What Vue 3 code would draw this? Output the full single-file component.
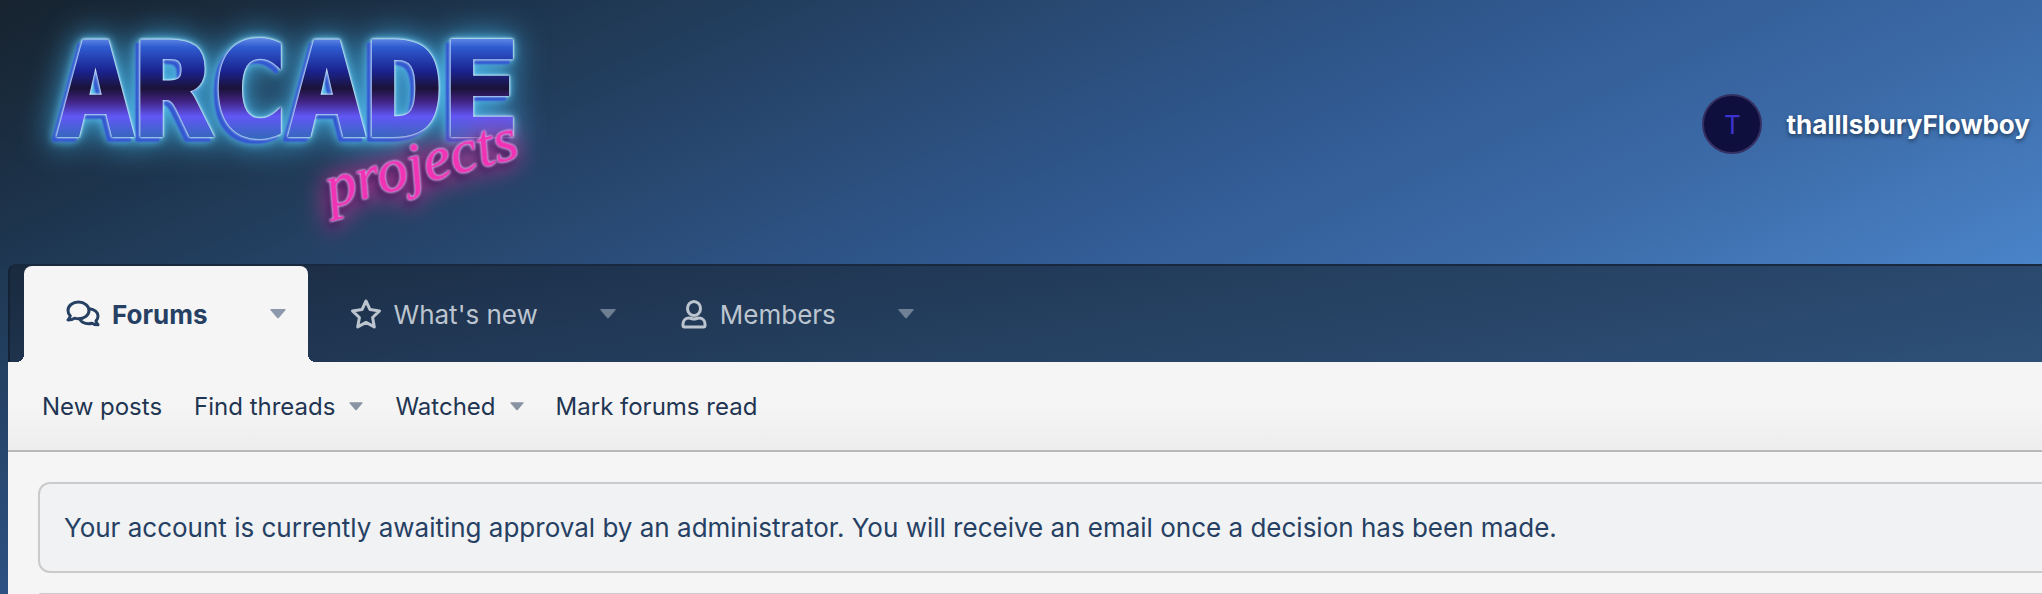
<template>
  <div class="page">
    <header class="header">
      <a href="#" class="logo" aria-label="Arcade Projects">
        <svg width="600" height="264" viewBox="0 0 600 264">
          <defs>
            <linearGradient id="chrome" gradientUnits="userSpaceOnUse" x1="0" y1="30" x2="0" y2="138">
              <stop offset="0" stop-color="#8db4f8" />
              <stop offset="0.16" stop-color="#2f5bd0" />
              <stop offset="0.38" stop-color="#1a2390" />
              <stop offset="0.54" stop-color="#1b1238" />
              <stop offset="0.66" stop-color="#402382" />
              <stop offset="0.8" stop-color="#6157f5" />
              <stop offset="1" stop-color="#3568bd" />
            </linearGradient>
          </defs>
          <text class="arcade" x="57" y="135">ARCADE</text>
          <g transform="rotate(-15 330 206)">
            <text class="script" x="330" y="208">projects</text>
          </g>
        </svg>
      </a>
      <a href="#" class="account">
        <span class="avatar">T</span>
        <span class="username">thaIllsburyFlowboy</span>
      </a>
    </header>

    <div class="shell">
      <nav class="nav">
        <div v-for="item in navItems" :key="item.label" class="tab" :class="{ active: item.active }">
          <a href="#" class="tab-link">
            <svg class="tab-icon" :viewBox="item.viewBox" :width="item.width" height="30">
              <path v-for="d in item.paths" :key="d" :d="d" />
            </svg>
            <span>{{ item.label }}</span>
          </a>
          <button type="button" class="tab-toggle" :aria-label="item.label + ' menu'">
            <svg width="16" height="10" viewBox="0 0 16 10"><path d="M1 0h14q1 0 .6 1L8.800 9q-.8.700-1.600 0L.4 1Q0 0 1 0z" /></svg>
          </button>
        </div>
      </nav>

      <nav class="subnav">
        <div v-for="link in subLinks" :key="link.label" class="sub-item">
          <a href="#">{{ link.label }}</a>
          <button v-if="link.menu" type="button" class="sub-toggle" :aria-label="link.label + ' menu'">
            <svg width="14" height="9" viewBox="0 0 16 10"><path d="M1 0h14q1 0 .6 1L8.800 9q-.8.700-1.600 0L.4 1Q0 0 1 0z" /></svg>
          </button>
        </div>
      </nav>

      <main class="content">
        <div class="notice">
          Your account is currently awaiting approval by an administrator. You will receive an email once a decision has been made.
        </div>
        <section class="block"></section>
      </main>
    </div>
  </div>
</template>

<script setup>
const navItems = [
  {
    label: 'Forums',
    active: true,
    width: 34,
    viewBox: '0 0 34 30',
    paths: [
      'M12.500 3C6.500 3 2 6.900 2 11.500c0 2.100.8 3.900 2.300 5.300C4 18.400 3.100 19.800 2 21c2.700 0 5-.7 6.600-1.800 1.200.4 2.500.6 3.900.6 6 0 10.500-3.800 10.500-8.300S18.500 3 12.500 3z',
      'M23.500 9.800c4.900.6 8.500 3.500 8.500 7.400 0 1.800-.7 3.400-2 4.700.3 1.500 1 2.800 2 3.900-2.400 0-4.500-.6-6-1.600-1.200.3-2.300.5-3.500.5-3.900 0-7.300-1.800-8.700-4.600',
    ],
  },
  {
    label: "What's new",
    width: 32,
    viewBox: '0 0 32 30',
    paths: ['M16 2l4 8.600 9.500 1.300-6.900 6.600 1.700 9.400L16 23.400l-8.300 4.500 1.700-9.400-6.900-6.600L12 10.600z'],
  },
  {
    label: 'Members',
    width: 28,
    viewBox: '-1 0 28 30',
    paths: [
      'M13 2.500a6.500 7 0 1 1 0 14 6.500 7 0 1 1 0-14z',
      'M8 19c2 0 2.800 1 5 1s3-1 5-1c3.500 0 6 2.500 6 6v1.500q0 1.500-1.500 1.500h-19Q2 28 2 26.500V25c0-3.500 2.500-6 6-6z',
    ],
  },
]

const subLinks = [
  { label: 'New posts' },
  { label: 'Find threads', menu: true },
  { label: 'Watched', menu: true },
  { label: 'Mark forums read' },
]
</script>

<style>
body { background: #27456a; }
</style>

<style scoped>
.page { min-height: 100vh; overflow: hidden; display: flex; flex-direction: column; font-family: Inter, "Liberation Sans", sans-serif; background: linear-gradient(156deg, #17232f 0%, #1e3650 17%, #294a74 33%, #315a92 47%, #3c6ba8 62%, #4a84c9 78%); box-sizing: border-box; }
a { color: inherit; text-decoration: none; }
button { padding: 0; border: none; background: none; color: inherit; cursor: pointer; display: flex; align-items: center; }
svg { display: block; }

.header { display: flex; justify-content: space-between; align-items: flex-start; height: 264px; }
.arcade {
  font-family: "DejaVu Sans Mono", monospace;
  font-weight: 700;
  font-size: 128px;
  fill: url(#chrome);
  stroke: url(#chrome);
  stroke-width: 4px;
  filter: drop-shadow(0 0 1px #e4f8ff) drop-shadow(0 0 1px #c4ecfa) drop-shadow(-4px 4px 0 #3458d0) drop-shadow(0 0 4px #5cc0ee) drop-shadow(0 0 16px #3da0d4);
}
.script {
  font-family: "Liberation Serif", serif;
  font-style: italic;
  font-size: 62px;
  fill: #f032b4;
  filter: drop-shadow(0 0 1px #e8c0f4) drop-shadow(0 0 1px #d8a0e8) drop-shadow(-4px 4px 4px #3a1a58) drop-shadow(0 0 12px #d0329c);
}

.account { display: flex; align-items: center; gap: 24px; padding: 94px 12px 0 0; }
.avatar { display: flex; align-items: center; justify-content: center; width: 60px; height: 60px; box-sizing: border-box; border: 2px solid #343061; border-radius: 50%; background: #0f0f3d; color: #3d33cc; font-size: 26px; }
.username { color: #fff; font-size: 26px; font-weight: 700; text-shadow: 0 2px 4px rgba(0, 0, 0, .5); }

.shell { flex: 1; margin-left: 8px; display: flex; flex-direction: column; }
.nav { display: flex; height: 98px; padding-left: 14px; box-sizing: border-box; border-top: 2px solid #18293f; border-left: 2px solid #142235; border-radius: 8px 0 0 0; background: linear-gradient(170deg, #192a3e 0%, #203653 30%, #264263 60%, #2e5078 100%); color: #bcc5cf; }
.tab { position: relative; display: flex; align-items: stretch; font-size: 26px; }
.tab-link { display: flex; align-items: center; gap: 12px; padding: 0 30px 0 42px; }
.tab-icon { fill: none; stroke: currentColor; stroke-width: 3px; stroke-linejoin: round; stroke-linecap: round; }
.tab-toggle { padding: 0 22px 0 32px; opacity: .5; fill: currentColor; }
.active { background: #f5f5f5; border-radius: 8px 8px 0 0; color: #264063; font-weight: 700; }
.active::before, .active::after { content: ""; position: absolute; bottom: 0; width: 8px; height: 8px; }
.active::before { right: 100%; background: radial-gradient(circle at 0 0, transparent 8px, #f5f5f5 8px); }
.active::after { left: 100%; background: radial-gradient(circle at 100% 0, transparent 8px, #f5f5f5 8px); }

.subnav { display: flex; align-items: center; gap: 32px; height: 90px; box-sizing: border-box; padding-left: 34px; border-bottom: 2px solid #b8b8b8; background: linear-gradient(#f5f5f5 50%, #ededed); color: #1f3552; font-size: 24px; }
.sub-item { display: flex; gap: 14px; }
.sub-toggle { opacity: .5; fill: currentColor; }

.content { flex: 1; padding: 30px 0 0 30px; background: #f5f5f5; }
.notice { padding: 28px 24px; border: 2px solid #cbcbcb; border-right: none; border-radius: 12px 0 0 12px; background: #f0f2f4; color: #264063; font-size: 26px; line-height: 31px; }
.block { height: 1px; margin-top: 20px; border-top: 2px solid #cbcbcb; border-radius: 12px 0 0 0; }
</style>
